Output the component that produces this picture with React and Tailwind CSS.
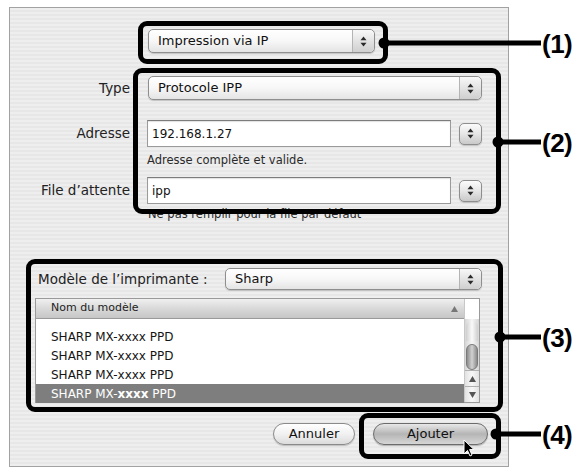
import React from "react";

const font = { fontFamily: '"DejaVu Sans", "Liberation Sans", sans-serif' };

function Arrows() {
  return (
    <svg width="7" height="11" viewBox="0 0 7 11">
      <path d="M3.5 0.5 L6.5 4.2 L0.5 4.2 Z" fill="#2a2a2a" />
      <path d="M0.5 6.8 L6.5 6.8 L3.5 10.5 Z" fill="#2a2a2a" />
    </svg>
  );
}

function Popup({ children, className }) {
  return (
    <div className={"flex rounded-[5px] border border-[#8e8e8e] bg-gradient-to-b from-white via-[#f7f7f7] to-[#e4e4e4] shadow-[0_1px_1px_rgba(0,0,0,0.18)] " + className}>
      <div className="flex flex-1 items-center pl-[9px] text-[13px] text-[#111]">{children}</div>
      <div className="flex w-[22px] items-center justify-center rounded-r-[5px] border-l border-[#b4b4b4] bg-gradient-to-b from-[#f8f8f8] to-[#cfcfcf]">
        <Arrows />
      </div>
    </div>
  );
}

function Stepper() {
  return (
    <div className="ml-[8px] flex h-[22px] w-[23px] items-center justify-center rounded-[5px] border border-[#8e8e8e] bg-gradient-to-b from-[#fbfbfb] via-[#e6e6e6] to-[#c9c9c9] shadow-[0_1px_1px_rgba(0,0,0,0.18)]">
      <Arrows />
    </div>
  );
}

function Field({ label, value }) {
  return (
    <div className="flex h-[27px] items-center">
      <div className="w-[120px] text-right text-[13.5px] text-[#222]">{label}</div>
      <div className="ml-[17px] flex h-[27px] w-[304px] items-center border border-[#9a9a9a] border-t-[#7c7c7c] bg-white pl-[4px] text-[12px] text-[#111] shadow-[inset_0_1px_1px_rgba(0,0,0,0.12)]">
        {value}
      </div>
      <Stepper />
    </div>
  );
}

function Row({ selected }) {
  return (
    <div className={"flex h-[19px] items-center pl-[15px] text-[12px] " + (selected ? "bg-[#7e7e7e] text-white" : "text-[#151515]")}>
      SHARP MX-<span className={selected ? "font-bold" : ""}>xxxx</span>&nbsp;PPD
    </div>
  );
}

function Callout({ x, y, label }) {
  return (
    <>
      <div className="absolute h-[11px] w-[11px] -translate-x-1/2 -translate-y-1/2 rounded-full bg-black" style={{ left: x, top: y }} />
      <div className="absolute h-[5px] -translate-y-1/2 bg-black" style={{ left: x, top: y, width: 541 - x }} />
      <div
        className="absolute -translate-y-1/2 text-[26px] font-bold leading-none tracking-[-0.5px] text-black"
        style={{ left: 542, top: y + 1, fontFamily: '"Liberation Sans", Arial, sans-serif' }}
      >
        {label}
      </div>
    </>
  );
}

export default function App() {
  return (
    <div className="relative h-[467px] w-[576px] overflow-hidden bg-white pl-[9px] pt-[7px]" style={font}>
      <div className="h-[460px] w-[500px] border border-[#a2a2a2] bg-[repeating-linear-gradient(0deg,#eeeeee_0px,#eeeeee_2px,#e7e7e7_2px,#e7e7e7_4px)]">
        <div className="pt-[21px]">
          <Popup className="ml-[138px] h-[24px] w-[227px]">Impression via IP</Popup>
        </div>

        <div className="mt-[23px] flex h-[24px] items-center">
          <div className="w-[120px] text-right text-[13.5px] text-[#222]">Type</div>
          <Popup className="ml-[18px] h-[24px] w-[334px]">Protocole IPP</Popup>
        </div>

        <div className="mt-[20px]">
          <Field label="Adresse" value="192.168.1.27" />
        </div>
        <div className="mt-[6px] h-[14px] pl-[137px] text-[11.5px] leading-[14px] text-[#2a2a2a]">Adresse complète et valide.</div>

        <div className="mt-[10px]">
          <Field label="File d’attente" value="ipp" />
        </div>
        <div className="mt-[3px] h-[14px] pl-[138px] text-[11.5px] leading-[14px] text-[#2a2a2a]">Ne pas remplir pour la file par défaut</div>

        <div className="mt-[47px] flex h-[22px] items-center pl-[28px]">
          <div className="w-[187px] text-[13.5px] text-[#222]">Modèle de l’imprimante :</div>
          <Popup className="h-[22px] w-[257px]">Sharp</Popup>
        </div>

        <div className="ml-[25px] mt-[8px] flex h-[105px] w-[445px] border border-[#9a9a9a] bg-white">
          <div className="flex-1">
            <div className="flex h-[20px] items-center justify-between border-b border-[#9a9a9a] bg-gradient-to-b from-[#f0f0f0] via-[#d9d9d9] to-[#c6c6c6] pl-[15px] pr-[6px] text-[11px] text-[#222]">
              <span>Nom du modèle</span>
              <svg width="7" height="6" viewBox="0 0 7 6"><path d="M3.5 0 L7 6 L0 6 Z" fill="#777" /></svg>
            </div>
            <div className="h-[8px]" />
            <Row />
            <Row />
            <Row />
            <Row selected />
          </div>
          <div className="flex w-[15px] flex-col border-l border-[#c8c8c8]">
            <div className="h-[20px] bg-white" />
            <div className="flex flex-1 flex-col bg-gradient-to-r from-[#d6d6d6] via-[#f6f6f6] to-[#d6d6d6]">
              <div className="mx-[1px] mt-[2px] h-[20px] rounded-t-full bg-gradient-to-r from-[#cfcfcf] via-[#fafafa] to-[#cfcfcf]" />
              <div className="mx-[1px] mt-[3px] h-[26px] rounded-full border border-[#7a7a7a] bg-gradient-to-r from-[#8c8c8c] via-[#d2d2d2] to-[#8c8c8c]" />
              <div className="flex-1" />
            </div>
            <div className="flex h-[16px] items-center justify-center border-t border-[#b0b0b0] bg-gradient-to-r from-[#e2e2e2] via-[#f8f8f8] to-[#e2e2e2]">
              <svg width="7" height="6" viewBox="0 0 7 6"><path d="M3.5 0 L7 6 L0 6 Z" fill="#555" /></svg>
            </div>
            <div className="flex h-[16px] items-center justify-center border-t border-[#b0b0b0] bg-gradient-to-r from-[#e2e2e2] via-[#f8f8f8] to-[#e2e2e2]">
              <svg width="7" height="6" viewBox="0 0 7 6"><path d="M0 0 L7 0 L3.5 6 Z" fill="#555" /></svg>
            </div>
          </div>
        </div>

        <div className="mt-[20px] flex justify-end gap-[18px] pr-[20px]">
          <div className="flex h-[22px] w-[82px] items-center justify-center rounded-full border border-[#8a8a8a] bg-gradient-to-b from-white via-[#f1f1f1] to-[#dcdcdc] text-[13px] text-[#111] shadow-[0_1px_1px_rgba(0,0,0,0.2)]">
            Annuler
          </div>
          <div className="flex h-[22px] w-[115px] items-center justify-center rounded-full border border-[#6c6c6c] bg-gradient-to-b from-[#e8e8e8] via-[#b5b5b5] to-[#d6d6d6] text-[13px] text-[#111] shadow-[0_1px_1px_rgba(0,0,0,0.25)]">
            Ajouter
          </div>
        </div>
      </div>

      {/* annotation boxes */}
      <div className="absolute left-[138px] top-[21px] h-[43px] w-[250px] rounded-[9px] border-[5px] border-black" />
      <div className="absolute left-[133px] top-[68px] h-[146px] w-[368px] rounded-[9px] border-[5px] border-black" />
      <div className="absolute left-[26px] top-[259px] h-[153px] w-[477px] rounded-[9px] border-[5px] border-black" />
      <div className="absolute left-[359px] top-[413px] h-[46px] w-[142px] rounded-[9px] border-[5px] border-black" />

      <Callout x={384} y={43} label="(1)" />
      <Callout x={498} y={142} label="(2)" />
      <Callout x={500} y={337} label="(3)" />
      <Callout x={496} y={434} label="(4)" />

      <svg className="absolute left-[463px] top-[439px]" width="12" height="18" viewBox="0 0 12 18">
        <path d="M1 1 L1 15 L4.5 11.5 L7 17 L9 16 L6.6 10.6 L11 10.6 Z" fill="#000" stroke="#fff" strokeWidth="1" />
      </svg>
    </div>
  );
}
